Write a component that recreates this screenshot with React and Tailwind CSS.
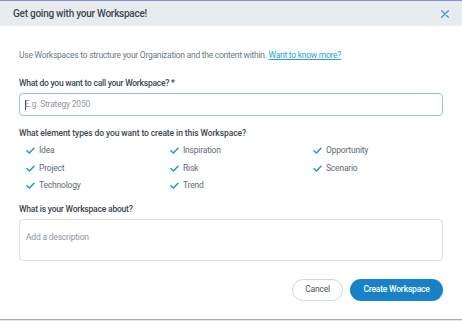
import React from "react";

const Check = () => (
  <svg width="9" height="7" viewBox="0 0 9 7" className="shrink-0">
    <path d="M1 3.8 L3.4 6 L8 1.2" fill="none" stroke="#2b8fd6" strokeWidth="1.5" strokeLinecap="round" strokeLinejoin="round" />
  </svg>
);

const Item = ({ label }) => (
  <div className="flex items-center gap-[4px] h-[17.5px]">
    <Check />
    <span className="text-[8.5px] tracking-[-0.2px] text-[#5f6b76]">{label}</span>
  </div>
);

export default function App() {
  const cols = [
    ["Idea", "Project", "Technology"],
    ["Inspiration", "Risk", "Trend"],
    ["Opportunity", "Scenario"],
  ];
  return (
    <div
      className="w-[462px] h-[321px] bg-white overflow-hidden flex flex-col"
      style={{ fontFamily: 'Roboto, "Open Sans", sans-serif' }}
    >
      <div className="h-[1px] bg-[#8790c4] shrink-0" />
      <div className="h-[25px] bg-[#e9ecef] flex items-center justify-between pl-[13px] pr-[13px] shrink-0">
        <span className="text-[10px] tracking-[-0.25px] font-medium text-[#3c4650]">Get going with your Workspace!</span>
        <svg width="8" height="8" viewBox="0 0 8 8">
          <path d="M0.7 0.7 L7.3 7.3 M7.3 0.7 L0.7 7.3" stroke="#3a9ad9" strokeWidth="1.3" strokeLinecap="round" />
        </svg>
      </div>
      <div className="flex-1 px-[19px] flex flex-col">
        <p className="mt-[23px] text-[8.5px] tracking-[-0.26px] text-[#6f7a84] leading-[12px]">
          Use Workspaces to structure your Organization and the content within.{" "}
          <span className="text-[#2a9fd8] underline">Want to know more?</span>
        </p>
        <p className="mt-[16px] text-[8.5px] tracking-[-0.25px] font-medium text-[#3c4650] leading-[12px]">
          What do you want to call your Workspace? *
        </p>
        <div className="mt-[4px] h-[23px] w-[424px] rounded-[4px] border border-[#8cc8ec] flex items-center pl-[5px]">
          <span className="w-[1px] h-[10px] bg-[#3c4650]" />
          <span className="text-[8.5px] tracking-[-0.2px] text-[#8e979f] ml-[-1px]">E.g. Strategy 2050</span>
        </div>
        <p className="mt-[11px] text-[8.5px] tracking-[-0.1px] font-medium text-[#3c4650] leading-[12px]">
          What element types do you want to create in this Workspace?
        </p>
        <div className="mt-[3px] pl-[7px] flex">
          <div className="w-[144px] flex flex-col">
            {cols[0].map((l) => <Item key={l} label={l} />)}
          </div>
          <div className="w-[143px] flex flex-col">
            {cols[1].map((l) => <Item key={l} label={l} />)}
          </div>
          <div className="flex flex-col">
            {cols[2].map((l) => <Item key={l} label={l} />)}
          </div>
        </div>
        <p className="mt-[8px] text-[8.5px] tracking-[-0.2px] font-medium text-[#3c4650] leading-[12px]">
          What is your Workspace about?
        </p>
        <div className="mt-[4px] h-[42px] w-[424px] rounded-[4px] border border-[#d9dee2] pl-[6px] pt-[3px]">
          <span className="text-[8.5px] tracking-[-0.2px] text-[#8e979f]">Add a description</span>
        </div>
        <div className="mt-[18px] flex justify-end gap-[7px]">
          <button className="h-[22px] w-[51px] rounded-full border border-[#d3d8dc] bg-white text-[8.5px] tracking-[-0.2px] text-[#4a555f]">
            Cancel
          </button>
          <button className="h-[22px] w-[93px] rounded-full bg-[#1782c5] text-[8.5px] tracking-[-0.2px] font-medium text-white">
            Create Workspace
          </button>
        </div>
      </div>
      <div className="h-[1px] bg-[#a8abae] shrink-0" />
      <div className="h-[1px] bg-[#e6e6e6] shrink-0" />
    </div>
  );
}
